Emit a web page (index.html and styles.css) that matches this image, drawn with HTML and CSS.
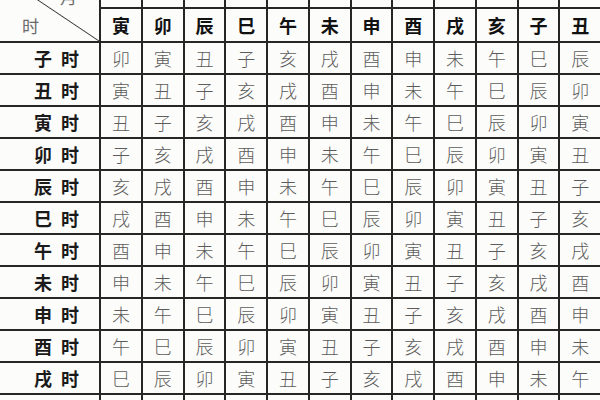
FILE: index.html
```html
<!DOCTYPE html>
<html lang="zh">
<head>
<meta charset="utf-8">
<title>时辰表</title>
<link rel="stylesheet" href="styles.css">
</head>
<body>
<table class="grid">
  <colgroup>
    <col class="c-label">
    <col class="c"><col class="c"><col class="c"><col class="c"><col class="c"><col class="c">
    <col class="c"><col class="c"><col class="c"><col class="c"><col class="c"><col class="c">
  </colgroup>
  <tr class="r-top">
    <td class="corner" rowspan="2">
      <div class="corner-m">月</div>
      <div class="corner-s">时</div>
    </td>
    <td></td><td></td><td></td><td></td><td></td><td></td>
    <td></td><td></td><td></td><td></td><td></td><td></td>
  </tr>
  <tr class="r-head">
    <th>寅</th><th>卯</th><th>辰</th><th>巳</th><th>午</th><th>未</th>
    <th>申</th><th>酉</th><th>戌</th><th>亥</th><th>子</th><th>丑</th>
  </tr>
  <tr><th class="lab">子时</th><td>卯</td><td>寅</td><td>丑</td><td>子</td><td>亥</td><td>戌</td><td>酉</td><td>申</td><td>未</td><td>午</td><td>巳</td><td>辰</td></tr>
  <tr><th class="lab">丑时</th><td>寅</td><td>丑</td><td>子</td><td>亥</td><td>戌</td><td>酉</td><td>申</td><td>未</td><td>午</td><td>巳</td><td>辰</td><td>卯</td></tr>
  <tr><th class="lab">寅时</th><td>丑</td><td>子</td><td>亥</td><td>戌</td><td>酉</td><td>申</td><td>未</td><td>午</td><td>巳</td><td>辰</td><td>卯</td><td>寅</td></tr>
  <tr><th class="lab">卯时</th><td>子</td><td>亥</td><td>戌</td><td>酉</td><td>申</td><td>未</td><td>午</td><td>巳</td><td>辰</td><td>卯</td><td>寅</td><td>丑</td></tr>
  <tr><th class="lab">辰时</th><td>亥</td><td>戌</td><td>酉</td><td>申</td><td>未</td><td>午</td><td>巳</td><td>辰</td><td>卯</td><td>寅</td><td>丑</td><td>子</td></tr>
  <tr><th class="lab">巳时</th><td>戌</td><td>酉</td><td>申</td><td>未</td><td>午</td><td>巳</td><td>辰</td><td>卯</td><td>寅</td><td>丑</td><td>子</td><td>亥</td></tr>
  <tr><th class="lab">午时</th><td>酉</td><td>申</td><td>未</td><td>午</td><td>巳</td><td>辰</td><td>卯</td><td>寅</td><td>丑</td><td>子</td><td>亥</td><td>戌</td></tr>
  <tr><th class="lab">未时</th><td>申</td><td>未</td><td>午</td><td>巳</td><td>辰</td><td>卯</td><td>寅</td><td>丑</td><td>子</td><td>亥</td><td>戌</td><td>酉</td></tr>
  <tr><th class="lab">申时</th><td>未</td><td>午</td><td>巳</td><td>辰</td><td>卯</td><td>寅</td><td>丑</td><td>子</td><td>亥</td><td>戌</td><td>酉</td><td>申</td></tr>
  <tr><th class="lab">酉时</th><td>午</td><td>巳</td><td>辰</td><td>卯</td><td>寅</td><td>丑</td><td>子</td><td>亥</td><td>戌</td><td>酉</td><td>申</td><td>未</td></tr>
  <tr><th class="lab">戌时</th><td>巳</td><td>辰</td><td>卯</td><td>寅</td><td>丑</td><td>子</td><td>亥</td><td>戌</td><td>酉</td><td>申</td><td>未</td><td>午</td></tr>
  <tr><th class="lab">亥时</th><td>辰</td><td>卯</td><td>寅</td><td>丑</td><td>子</td><td>亥</td><td>戌</td><td>酉</td><td>申</td><td>未</td><td>午</td><td>巳</td></tr>
</table>
</body>
</html>
```

FILE: styles.css
```css
html, body {
  margin: 0;
  padding: 0;
  background: #fcfcfb;
  width: 600px;
  height: 400px;
  overflow: hidden;
}

.grid {
  border-collapse: collapse;
  table-layout: fixed;
  width: 606px;
  margin-left: -6px;
  margin-top: -30px;
  font-family: "Noto Sans CJK SC", "Noto Sans CJK TC", sans-serif;
}

.c-label { width: 105px; }
.c { width: 41.75px; }

.grid td,
.grid th {
  border: 2px solid #262626;
  padding: 0;
  text-align: center;
  vertical-align: middle;
}

.grid td {
  font-size: 18px;
  font-weight: 300;
  color: #5c5c5c;
  height: 30px;
  line-height: 20px;
}

.r-top td { height: 35px; }

.r-head th {
  height: 32px;
  font-size: 18px;
  font-weight: 700;
  color: #111;
  line-height: 20px;
}

.grid th.lab {
  font-size: 18px;
  font-weight: 700;
  color: #1a1a1a;
  letter-spacing: 9px;
  padding-left: 27px;
  text-align: center;
}

.grid td.corner {
  vertical-align: top;
  text-align: left;
  color: #6a6a6a;
  font-size: 17px;
  font-weight: 400;
  background: linear-gradient(to top right, transparent calc(50% - 0.9px), #3a3a3a 50%, transparent calc(50% + 0.9px));
}

.corner-m {
  text-align: right;
  padding-right: 22px;
  margin-top: 15px;
  line-height: 20px;
}

.corner-s {
  padding-left: 26px;
  margin-top: 9px;
  line-height: 20px;
}
```
